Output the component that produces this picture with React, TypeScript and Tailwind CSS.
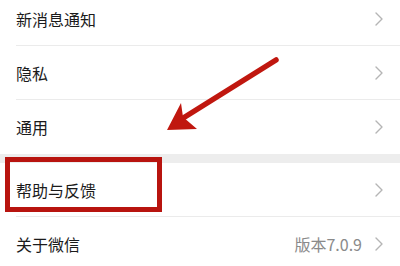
import React from 'react';

type Row = { label: string; value?: string };

const groupA: Row[] = [{ label: '新消息通知' }, { label: '隐私' }, { label: '通用' }];
const groupB: Row[] = [{ label: '帮助与反馈' }, { label: '关于微信', value: '版本7.0.9' }];

function Chevron() {
  return (
    <svg width="8" height="14" viewBox="0 0 8 14" className="shrink-0">
      <polyline points="1,1 7,7 1,13" fill="none" stroke="#b5b5b5" strokeWidth="1.4" strokeLinejoin="round" strokeLinecap="round" />
    </svg>
  );
}

function Group({ rows }: { rows: Row[] }) {
  return (
    <div className="bg-white pl-4">
      {rows.map((row, i) => (
        <div
          key={row.label}
          className={`flex h-[54px] items-center pr-[17px] ${i < rows.length - 1 ? 'border-b border-[#ebebeb]' : ''}`}
        >
          <span className="flex-1 text-[16px] text-[#1b1b1b]">{row.label}</span>
          {row.value && <span className="mr-[13px] text-[16px] text-[#8a8a8a]">{row.value}</span>}
          <Chevron />
        </div>
      ))}
    </div>
  );
}

export default function App() {
  return (
    <div
      className="relative h-[266px] w-[400px] overflow-hidden bg-white"
      style={{ fontFamily: '"Noto Sans CJK SC", "Noto Sans", sans-serif' }}
    >
      <div className="-mt-[8px]">
        <Group rows={groupA} />
        <div className="h-[9px] bg-[#ededed]" />
        <Group rows={groupB} />
      </div>

      {/* annotation: highlight box */}
      <div className="absolute left-[5px] top-[157px] h-[55px] w-[157px] border-[5px] border-[#b8140f]" />

      {/* annotation: arrow */}
      <svg className="absolute inset-0" width="400" height="266" viewBox="0 0 400 266">
        <line x1="276" y1="60" x2="180" y2="120" stroke="#c0170f" strokeWidth="5.5" strokeLinecap="round" />
        <polygon points="167,130 181,103 183,117 197,129" fill="#c0170f" />
      </svg>
    </div>
  );
}
